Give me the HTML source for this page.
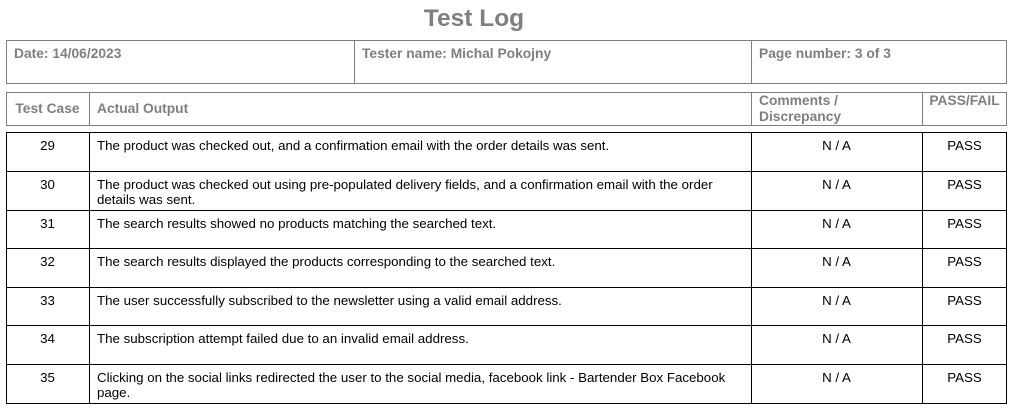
<!DOCTYPE html>
<html><head><style>
body{margin:0;width:1018px;height:415px;background:#fff;font-family:"Liberation Sans",Arial,sans-serif;position:relative;overflow:hidden}
.a{position:absolute;box-sizing:border-box}
.g{color:#7f7f7f;font-weight:bold;font-size:13.8px}
.t{font-size:13.3px;color:#000}
</style></head><body>
<div class="a" style="left:0;width:948px;top:5px;text-align:center;font-size:24.5px;font-weight:bold;color:#7f7f7f">Test Log</div>
<div class="a" style="left:6px;top:40px;width:1001px;height:44px;border:1px solid #7f7f7f"></div>
<div class="a" style="left:354px;top:40px;width:1px;height:44px;background:#7f7f7f"></div>
<div class="a" style="left:751px;top:40px;width:1px;height:44px;background:#7f7f7f"></div>
<div class="a g" style="left:14px;top:46px">Date: 14/06/2023</div>
<div class="a g" style="left:362px;top:46px">Tester name: Michal Pokojny</div>
<div class="a g" style="left:759px;top:46px">Page number: 3 of 3</div>

<div class="a" style="left:6px;top:92px;width:1001px;height:34px;border:1px solid #7f7f7f"></div>
<div class="a" style="left:89px;top:92px;width:1px;height:34px;background:#7f7f7f"></div>
<div class="a" style="left:751px;top:92px;width:1px;height:34px;background:#7f7f7f"></div>
<div class="a" style="left:922px;top:92px;width:1px;height:34px;background:#7f7f7f"></div>
<div class="a g" style="left:6px;width:83px;top:101px;text-align:center">Test Case</div>
<div class="a g" style="left:97px;top:101px">Actual Output</div>
<div class="a g" style="left:759px;top:93px;line-height:16px">Comments /<br>Discrepancy</div>
<div class="a g" style="left:922px;width:85px;top:93px;text-align:center">PASS/FAIL</div>

<div class="a" style="left:6px;top:132px;width:1001px;height:272px;border:1px solid #000"></div>
<div class="a" style="left:89px;top:132px;width:1px;height:272px;background:#000"></div>
<div class="a" style="left:751px;top:132px;width:1px;height:272px;background:#000"></div>
<div class="a" style="left:922px;top:132px;width:1px;height:272px;background:#000"></div>
<div class="a" style="left:6px;top:171px;width:1001px;height:1px;background:#000"></div>
<div class="a" style="left:6px;top:210px;width:1001px;height:1px;background:#000"></div>
<div class="a" style="left:6px;top:248px;width:1001px;height:1px;background:#000"></div>
<div class="a" style="left:6px;top:287px;width:1001px;height:1px;background:#000"></div>
<div class="a" style="left:6px;top:325px;width:1001px;height:1px;background:#000"></div>
<div class="a" style="left:6px;top:364px;width:1001px;height:1px;background:#000"></div>

<div class="a t" style="left:6px;width:83px;top:138px;text-align:center">29</div>
<div class="a t" style="left:97px;top:138px">The product was checked out, and a confirmation email with the order details was sent.</div>
<div class="a t" style="left:6px;width:83px;top:177px;text-align:center">30</div>
<div class="a t" style="left:97px;top:177px;width:640px;line-height:15px">The product was checked out using pre-populated delivery fields, and a confirmation email with the order details was sent.</div>
<div class="a t" style="left:6px;width:83px;top:216px;text-align:center">31</div>
<div class="a t" style="left:97px;top:216px">The search results showed no products matching the searched text.</div>
<div class="a t" style="left:6px;width:83px;top:254px;text-align:center">32</div>
<div class="a t" style="left:97px;top:254px">The search results displayed the products corresponding to the searched text.</div>
<div class="a t" style="left:6px;width:83px;top:293px;text-align:center">33</div>
<div class="a t" style="left:97px;top:293px">The user successfully subscribed to the newsletter using a valid email address.</div>
<div class="a t" style="left:6px;width:83px;top:331px;text-align:center">34</div>
<div class="a t" style="left:97px;top:331px">The subscription attempt failed due to an invalid email address.</div>
<div class="a t" style="left:6px;width:83px;top:370px;text-align:center">35</div>
<div class="a t" style="left:97px;top:370px;width:640px;line-height:15px">Clicking on the social links redirected the user to the social media, facebook link - Bartender Box Facebook page.</div>

<div class="a t" style="left:751px;width:171px;top:138px;text-align:center">N / A</div>
<div class="a t" style="left:751px;width:171px;top:177px;text-align:center">N / A</div>
<div class="a t" style="left:751px;width:171px;top:216px;text-align:center">N / A</div>
<div class="a t" style="left:751px;width:171px;top:254px;text-align:center">N / A</div>
<div class="a t" style="left:751px;width:171px;top:293px;text-align:center">N / A</div>
<div class="a t" style="left:751px;width:171px;top:331px;text-align:center">N / A</div>
<div class="a t" style="left:751px;width:171px;top:370px;text-align:center">N / A</div>
<div class="a t" style="left:922px;width:85px;top:138px;text-align:center">PASS</div>
<div class="a t" style="left:922px;width:85px;top:177px;text-align:center">PASS</div>
<div class="a t" style="left:922px;width:85px;top:216px;text-align:center">PASS</div>
<div class="a t" style="left:922px;width:85px;top:254px;text-align:center">PASS</div>
<div class="a t" style="left:922px;width:85px;top:293px;text-align:center">PASS</div>
<div class="a t" style="left:922px;width:85px;top:331px;text-align:center">PASS</div>
<div class="a t" style="left:922px;width:85px;top:370px;text-align:center">PASS</div>
</body></html>
